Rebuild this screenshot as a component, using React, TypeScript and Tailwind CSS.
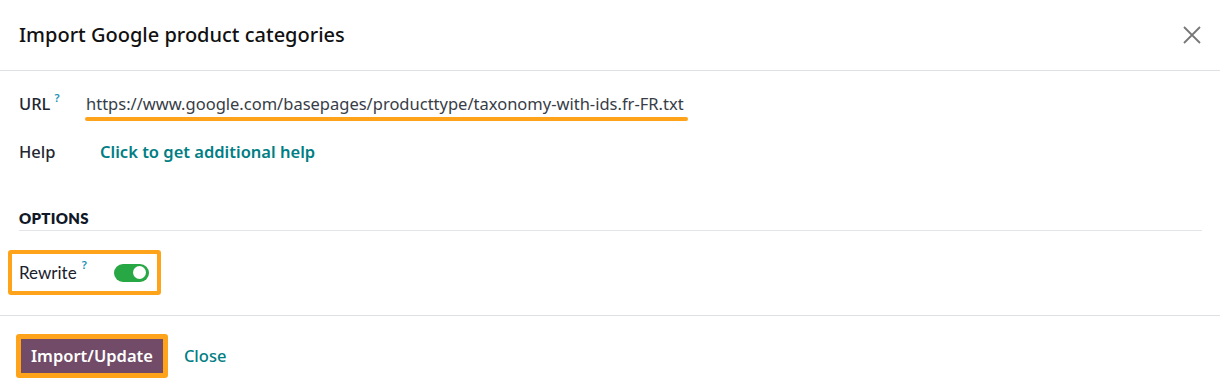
export default function App() {
  const font = { fontFamily: '"Noto Sans", "Open Sans", sans-serif' };
  const lato = { fontFamily: 'Lato, "Noto Sans", sans-serif' };
  return (
    <div className="w-[1220px] h-[390px] bg-white text-[#212529]" style={font}>
      <div className="flex items-center justify-between h-[71px] border-b border-[#dee2e6] pl-[19px] pr-[18px]">
        <h1 className="text-[20px] font-medium text-[#111]">Import Google product categories</h1>
        <button className="text-[#777] w-[20px] h-[20px] flex items-center justify-center">
          <svg width="20" height="20" viewBox="0 0 20 20" fill="none" stroke="currentColor" strokeWidth="1.8">
            <path d="M2 2L18 18M18 2L2 18" />
          </svg>
        </button>
      </div>

      <div className="pl-[19px] pr-[18px]">
        <div className="flex items-start mt-[20px] h-[32px]">
          <div className="w-[67px] flex items-start text-[16.5px] font-medium text-[#1f2733] leading-[26px]">
            URL<span className="text-[#1a8fb8] text-[11px] ml-[4px] -mt-[3px] font-semibold leading-[20px]">?</span>
          </div>
          <div className="flex flex-col">
            <span className="text-[16.5px] text-[#373d47] leading-[26px]">
              https://www.google.com/basepages/producttype/taxonomy-with-ids.fr-FR.txt
            </span>
            <div className="h-[4px] rounded-full bg-[#ffa31a] -ml-[1px] w-[603px]"></div>
          </div>
        </div>
        <div className="flex items-center mt-[12px] h-[34px]">
          <div className="w-[81px] text-[16.5px] font-medium text-[#1f2733]">Help</div>
          <a className="text-[16.5px] font-semibold text-[#017e84]">Click to get additional help</a>
        </div>

        <div className="mt-[39px] h-[20px] leading-[20px] text-[15px] font-extrabold tracking-[0.3px] text-[#111827]" style={lato}>
          OPTIONS
        </div>
        <div className="mt-[2px] border-b border-[#e3e5e8]"></div>
      </div>

      <div className="pl-[8px] mt-[19px] h-[45px]">
        <div className="flex items-center w-[153px] h-[45px] border-[4px] border-[#ffa31a] rounded-[3px] pl-[7px]">
          <span className="text-[17px] text-[#1a202c]" style={lato}>Rewrite</span>
          <span className="text-[#1a8fb8] text-[11px] ml-[5px] -mt-[14px] font-semibold">?</span>
          <span className="ml-[27px] w-[35px] h-[18px] rounded-full bg-[#28a745] flex items-center justify-end pr-[3px]">
            <span className="w-[13px] h-[13px] rounded-full bg-white"></span>
          </span>
        </div>
      </div>

      <div className="mt-[20px] border-t border-[#dee2e6]"></div>

      <div className="flex items-center pl-[16px] mt-[18px]">
        <div className="border-[5px] border-[#ffa31a] rounded-[3px]">
          <button className="bg-[#714b67] text-white text-[16.5px] font-semibold px-[10px] h-[34px] leading-[34px]">
            Import/Update
          </button>
        </div>
        <a className="ml-[16px] text-[16.5px] font-medium text-[#017e84]">Close</a>
      </div>
    </div>
  );
}
